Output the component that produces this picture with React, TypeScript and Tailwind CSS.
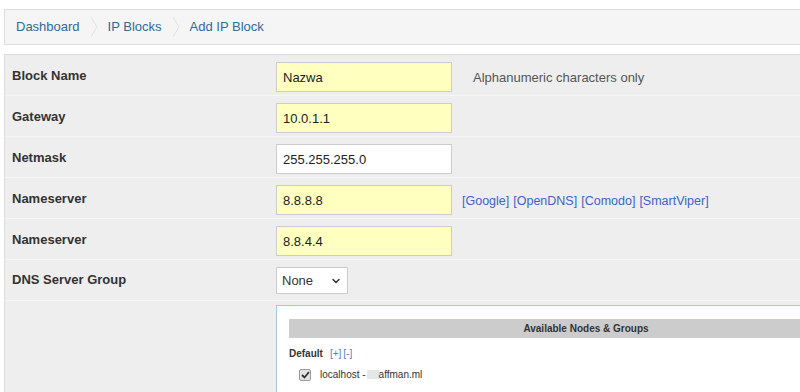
import { ChevronDown } from 'lucide-react';

const crumbs = ['Dashboard', 'IP Blocks', 'Add IP Block'];

function Crumb({ label, last }: { label: string; last: boolean }) {
  return (
    <div className="flex items-center">
      <a className="text-[13px] text-[#2f6a9a] cursor-pointer">{label}</a>
      {!last && (
        <svg width="8" height="20" viewBox="0 0 8 20" className="mx-[10px]">
          <polyline points="1,0 7,10 1,20" fill="none" stroke="#e2e2e2" strokeWidth="1" />
        </svg>
      )}
    </div>
  );
}

function TextField({ value, yellow = true }: { value: string; yellow?: boolean }) {
  return (
    <input
      readOnly
      value={value}
      className={`w-[176px] h-[30px] border border-[#cccccc] px-[6px] text-[13px] text-[#222] outline-none ${
        yellow ? 'bg-[#ffffc0]' : 'bg-white'
      }`}
    />
  );
}

function Row({ label, children }: { label: string; children?: React.ReactNode }) {
  return (
    <div className="flex h-[41px] border-b border-[#f6f6f6]">
      <div className="w-[261px] pl-[7px] pt-[1px] flex items-center text-[13px] font-bold text-[#333]">{label}</div>
      <div className="flex-1 pl-[10px] pt-[7px] flex items-start">{children}</div>
    </div>
  );
}

export default function App() {
  return (
    <div className="w-[800px] h-[392px] overflow-hidden bg-white" style={{ fontFamily: '"Liberation Sans", Arial, sans-serif' }}>
      <div className="w-[940px] pl-[4px] pt-[9px]">
        {/* Breadcrumb */}
        <div className="h-[36px] flex items-center pl-[11px] bg-[#f5f5f5] border border-[#dddddd]">
          {crumbs.map((c, i) => (
            <Crumb key={c} label={c} last={i === crumbs.length - 1} />
          ))}
        </div>

        {/* Form table */}
        <div className="mt-[9px] bg-[#eeeeee] border-l border-t border-[#dddddd]">
          <Row label="Block Name">
            <TextField value="Nazwa" />
            <span className="ml-[21px] mt-[6px] text-[13px] text-[#555]">Alphanumeric characters only</span>
          </Row>
          <Row label="Gateway">
            <TextField value="10.0.1.1" />
          </Row>
          <Row label="Netmask">
            <TextField value="255.255.255.0" yellow={false} />
          </Row>
          <Row label="Nameserver">
            <TextField value="8.8.8.8" />
            <div className="ml-[10px] mt-[7px] text-[12.5px] text-[#3d63c9] flex gap-[4px]">
              <a>[Google]</a>
              <a>[OpenDNS]</a>
              <a>[Comodo]</a>
              <a>[SmartViper]</a>
            </div>
          </Row>
          <Row label="Nameserver">
            <TextField value="8.8.4.4" />
          </Row>
          <div className="flex h-[41px] border-b border-[#f6f6f6]">
            <div className="w-[261px] pl-[7px] flex items-center text-[13px] font-bold text-[#333]">DNS Server Group</div>
            <div className="flex-1 pl-[10px] pt-[7px]">
              <div className="relative w-[72px] h-[27px]">
                <select className="appearance-none w-full h-full border border-[#cccccc] bg-white pl-[5px] text-[13px] text-[#333] outline-none">
                  <option>None</option>
                </select>
                <ChevronDown size={12} strokeWidth={3} className="absolute right-[6px] top-[8px] text-[#333] pointer-events-none" />
              </div>
            </div>
          </div>

          {/* Nodes */}
          <div className="flex pt-[4px]">
            <div className="w-[261px]" />
            <div className="flex-1 pl-[10px]">
              <div className="w-[620px] h-[120px] bg-white border border-[#a9c4ea] px-[12px] pt-[13px]">
                <div className="h-[19px] bg-[#cccccc] flex items-center justify-center text-[10px] font-bold text-[#333]">
                  Available Nodes &amp; Groups
                </div>
                <div className="mt-[8px] flex items-center text-[10px]">
                  <span className="font-bold text-[#333]">Default</span>
                  <a className="ml-[7px] text-[#5a78cc]">[+]</a>
                  <a className="ml-[2px] text-[#5a78cc]">[-]</a>
                </div>
                <div className="mt-[6px] ml-[10px] flex items-center text-[10px] text-[#333]">
                  <span className="w-[12px] h-[12px] border border-[#9a9a9a] bg-[#e2e2e2] rounded-[2px] flex items-center justify-center">
                    <svg width="9" height="8" viewBox="0 0 9 8">
                      <polyline points="1,4 3.5,6.5 8,1" fill="none" stroke="#333" strokeWidth="1.8" />
                    </svg>
                  </span>
                  <span className="ml-[9px]">localhost - </span>
                  <span className="inline-block w-[12px] h-[9px] bg-[#e6e6e6] ml-[1px]" />
                  <span>affman.ml</span>
                </div>
              </div>
            </div>
          </div>
        </div>
      </div>
    </div>
  );
}
